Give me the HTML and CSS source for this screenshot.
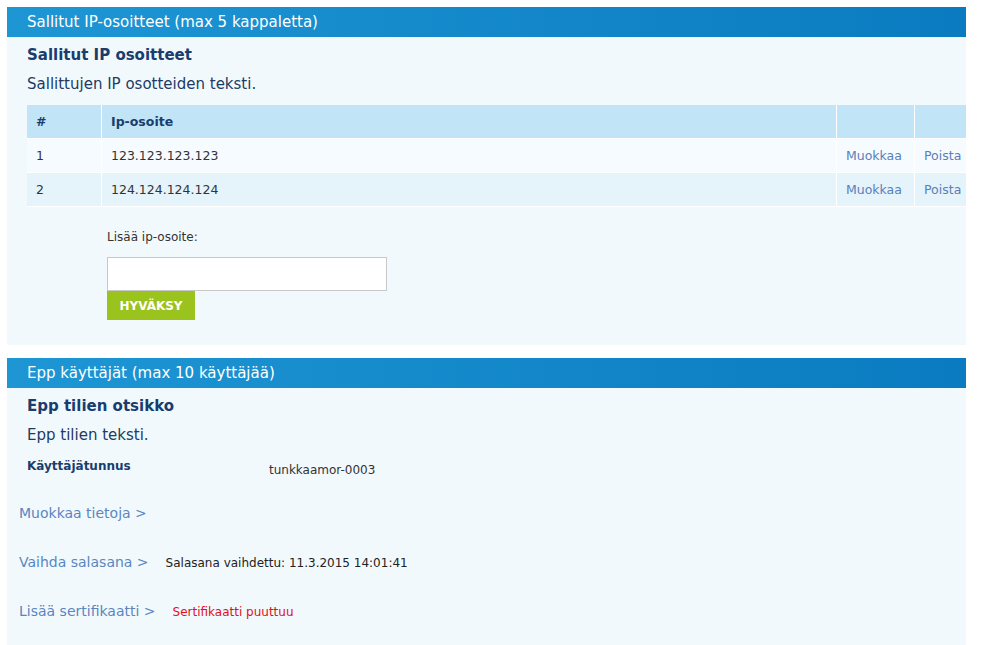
FILE: index.html
```html
<!DOCTYPE html>
<html>
<head>
<meta charset="utf-8">
<link rel="stylesheet" href="styles.css">
</head>
<body>
<div class="page">
  <section class="panel panel-ip">
    <div class="panel-head">Sallitut IP-osoitteet (max 5 kappaletta)</div>
    <div class="panel-body">
      <h2 class="title">Sallitut IP osoitteet</h2>
      <p class="lead">Sallittujen IP osotteiden teksti.</p>
      <table class="iptable">
        <thead>
          <tr><th class="c-num">#</th><th class="c-ip">Ip-osoite</th><th class="c-edit"></th><th class="c-del"></th></tr>
        </thead>
        <tbody>
          <tr class="odd"><td>1</td><td>123.123.123.123</td><td><a class="act">Muokkaa</a></td><td><a class="act">Poista</a></td></tr>
          <tr class="even"><td>2</td><td>124.124.124.124</td><td><a class="act">Muokkaa</a></td><td><a class="act">Poista</a></td></tr>
        </tbody>
      </table>
      <form class="addform">
        <label class="addlabel">Lisää ip-osoite:</label>
        <input class="addinput" type="text">
        <button class="btn" type="button">HYVÄKSY</button>
      </form>
    </div>
  </section>

  <section class="panel panel-epp">
    <div class="panel-head">Epp käyttäjät (max 10 käyttäjää)</div>
    <div class="panel-body">
      <h2 class="title">Epp tilien otsikko</h2>
      <p class="lead">Epp tilien teksti.</p>
      <div class="userrow">
        <span class="ulabel">Käyttäjätunnus</span>
        <span class="uvalue">tunkkaamor-0003</span>
      </div>
    </div>
    <div class="links">
      <div class="linkrow"><a class="biglink">Muokkaa tietoja &gt;</a></div>
      <div class="linkrow"><a class="biglink">Vaihda salasana &gt;</a><span class="note">Salasana vaihdettu: 11.3.2015 14:01:41</span></div>
      <div class="linkrow"><a class="biglink">Lisää sertifikaatti &gt;</a><span class="note warn">Sertifikaatti puuttuu</span></div>
    </div>
  </section>
</div>
</body>
</html>
```

FILE: styles.css
```css
html, body {
  margin: 0;
  padding: 0;
  background: #ffffff;
}
body {
  font-family: "DejaVu Sans", Verdana, sans-serif;
  color: #222;
}
.page {
  padding: 7px 20px 0 7px;
  display: flex;
  flex-direction: column;
  gap: 13px;
}
.panel {
  background: #f2f9fd;
}
.panel-head {
  height: 30px;
  line-height: 30px;
  background: linear-gradient(to right, #1e96d4, #0a7bc0);
  color: #ffffff;
  font-size: 15px;
  padding-left: 20px;
}
.panel-body {
  padding: 0 0 0 20px;
}
.title {
  margin: 0;
  padding-top: 9px;
  font-size: 15px;
  font-weight: bold;
  color: #183d6e;
  line-height: 18px;
}
.lead {
  margin: 11px 0 0 0;
  font-size: 15px;
  line-height: 18px;
  color: #1d3b63;
}
.iptable {
  margin-top: 12px;
  width: 100%;
  border-collapse: collapse;
  font-size: 12.5px;
}
.iptable th, .iptable td {
  border: 1px solid #ffffff;
  text-align: left;
  padding: 0 0 0 9px;
  height: 33px;
}
.iptable tr:first-child th { border-top: 0; }
.iptable th:first-child, .iptable td:first-child { border-left: 0; }
.iptable th:last-child, .iptable td:last-child { border-right: 0; }
.iptable th {
  background: #c1e5f6;
  color: #183d6e;
  font-weight: bold;
}
.iptable td { color: #333; }
.c-num { width: 65px; }
.c-edit { width: 68px; }
.c-del { width: 42px; }
.odd td { background: #f5fbfe; }
.even td { background: #e5f3fb; }
.act { color: #5a7fbb; }
.addform {
  padding: 23px 0 25px 80px;
  display: flex;
  flex-direction: column;
  align-items: flex-start;
}
.addlabel {
  font-size: 12px;
  color: #333;
  line-height: 15px;
}
.addinput {
  margin-top: 12px;
  width: 280px;
  height: 34px;
  box-sizing: border-box;
  border: 1px solid #c8c8c8;
  background: #fff;
  padding: 0 6px;
}
.btn {
  width: 88px;
  height: 29px;
  border: 0;
  background: #9bc31d;
  color: #fff;
  font-family: "DejaVu Sans", Verdana, sans-serif;
  font-weight: bold;
  font-size: 12px;
  padding: 0;
}
.userrow {
  margin-top: 15px;
  display: flex;
  align-items: flex-start;
  font-size: 12px;
}
.ulabel {
  width: 242px;
  font-weight: bold;
  color: #183d6e;
}
.uvalue {
  margin-top: 4px;
  color: #333;
}
.links {
  padding: 28px 0 40px 12px;
  display: flex;
  flex-direction: column;
  gap: 31px;
}
.linkrow {
  display: flex;
  align-items: baseline;
  height: 18px;
}
.biglink {
  font-size: 14px;
  color: #5a86bf;
}
.note {
  font-size: 12px;
  color: #222;
  margin-left: 17px;
}
.warn {
  color: #e0101a;
}
```
